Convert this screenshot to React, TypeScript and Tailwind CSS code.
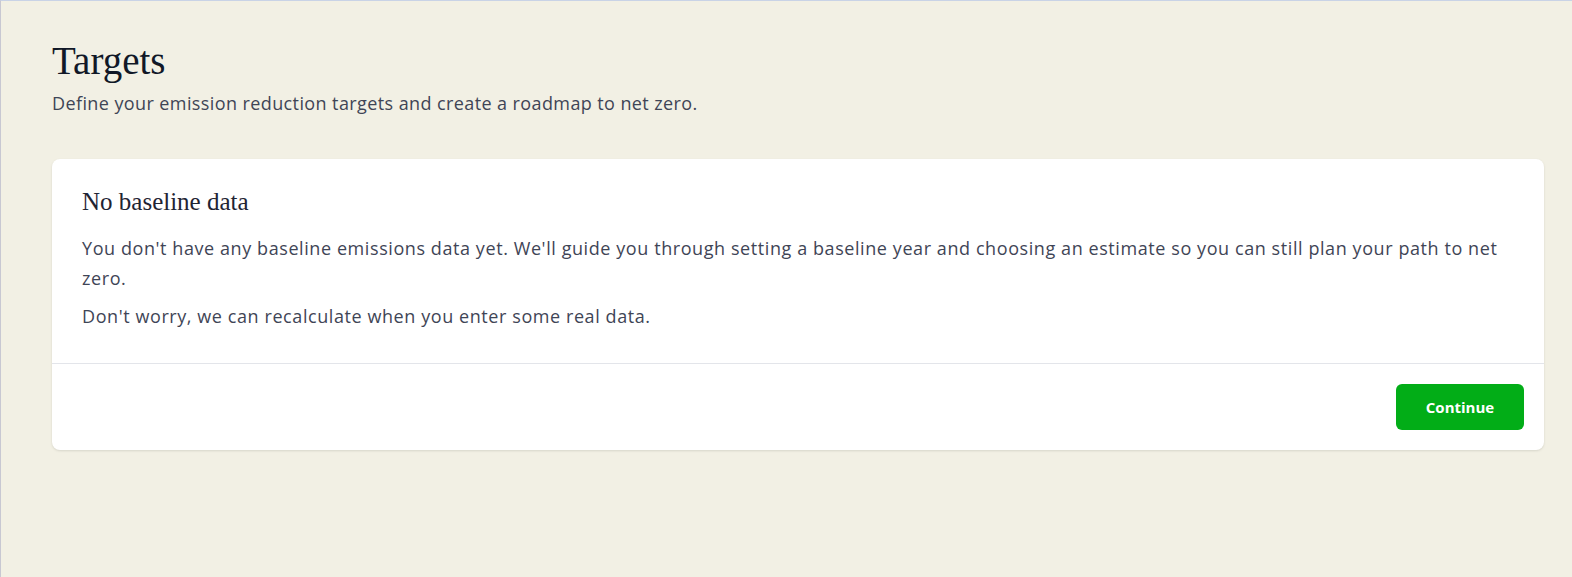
import React from "react";

export default function App() {
  return (
    <div
      className="min-h-[577px] w-full bg-[#f2f0e4] border-t border-t-[#c9d3e6] border-l border-l-[#c8c8d2] pl-[51px] pr-[28px] pt-[40px] pb-10"
      style={{ fontFamily: '"Open Sans", sans-serif' }}
    >
      <h1 className="text-[39px] leading-none text-[#111827] font-['Liberation_Serif',serif]">
        Targets
      </h1>
      <p className="mt-[11px] text-[18px] leading-[24px] tracking-[0.4px] text-[#3f4556]">
        Define your emission reduction targets and create a roadmap to net zero.
      </p>

      <div className="mt-[44px] bg-white rounded-lg shadow-[0_1px_3px_rgba(0,0,0,0.08),0_1px_2px_rgba(0,0,0,0.04)]">
        <div className="px-[30px] pt-[30px] pb-[32px]">
          <h2 className="text-[25px] leading-none text-[#1f2433] font-['Liberation_Serif',serif]">
            No baseline data
          </h2>
          <p className="mt-[19px] text-[18px] leading-[30px] tracking-[0.58px] text-[#3f4556]">
            You don't have any baseline emissions data yet. We'll guide you through setting a baseline year and choosing an estimate so you can still plan your path to net zero.
          </p>
          <p className="mt-[8px] text-[18px] leading-[30px] tracking-[0.58px] text-[#3f4556]">
            Don't worry, we can recalculate when you enter some real data.
          </p>
        </div>
        <div className="border-t border-[#e3e5ea] p-5 flex justify-end">
          <button className="h-[46px] w-[128px] rounded-md bg-[#02ad17] text-white text-[15px] font-bold">
            Continue
          </button>
        </div>
      </div>
    </div>
  );
}
